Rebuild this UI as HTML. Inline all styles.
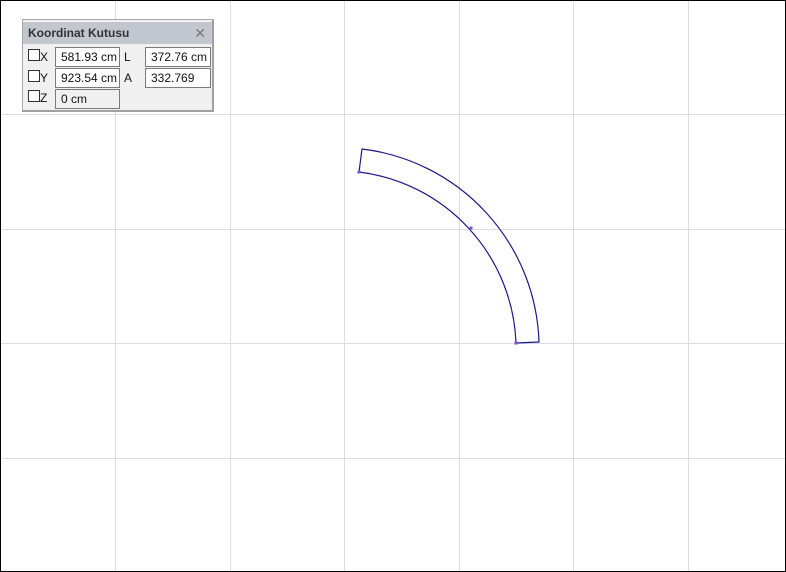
<!DOCTYPE html>
<html><head><meta charset="utf-8"><style>
*{margin:0;padding:0;box-sizing:border-box}
body{width:786px;height:572px;overflow:hidden;background:#fff;font-family:"Liberation Sans",sans-serif;position:relative}
#frame{position:absolute;left:0;top:0;width:786px;height:572px;border:1px solid #000}
svg{position:absolute;left:0;top:0}
.panel{position:absolute;left:22px;top:19px;width:192px;height:93px;background:#f0f0f0;border:1px solid #a8a8a8;border-right:2px solid #a0a0a0;border-bottom:2px solid #a0a0a0}
.title{position:absolute;left:0;top:2px;width:100%;height:22px;background:#c2c6ce;font-weight:bold;font-size:12px;color:#333;line-height:22px;padding-left:5px}
.x{position:absolute;right:6px;top:0;font-weight:normal;color:#777;font-size:14px}
.cb{position:absolute;width:12px;height:12px;border:1px solid #333;background:#fff}
.lb{position:absolute;font-size:12px;color:#111}
.in{position:absolute;height:20px;border:1px solid #7a7a7a;background:#fff;font-size:12px;line-height:18px;padding-left:5px;color:#111}
</style></head><body>
<svg width="786" height="572">
<g stroke="#dcdce6" stroke-width="1">
<line x1="115.5" y1="0" x2="115.5" y2="572"/><line x1="230.5" y1="0" x2="230.5" y2="572"/><line x1="344.5" y1="0" x2="344.5" y2="572"/><line x1="459.5" y1="0" x2="459.5" y2="572"/><line x1="573.5" y1="0" x2="573.5" y2="572"/><line x1="688.5" y1="0" x2="688.5" y2="572"/>
<line x1="0" y1="114.5" x2="786" y2="114.5"/><line x1="0" y1="229.5" x2="786" y2="229.5"/><line x1="0" y1="343.5" x2="786" y2="343.5"/><line x1="0" y1="458.5" x2="786" y2="458.5"/>
</g>
<path d="M359,172 A179,179 0 0 1 516,343 L539,342 A201,201 0 0 0 362,149 Z" fill="none" stroke="#1a1a8a" stroke-width="1.2"/>
<g fill="#8a4ad0"><rect x="357.5" y="170.5" width="3" height="3"/><rect x="469.5" y="226.5" width="3" height="3"/><rect x="514.5" y="341.5" width="3" height="3"/></g>
</svg>
<div id="frame"></div>
<div class="panel">
<div class="title">Koordinat Kutusu<span class="x">✕</span></div>
<div class="cb" style="left:5px;top:29px"></div><div class="lb" style="left:17px;top:30px">X</div>
<div class="cb" style="left:5px;top:50px"></div><div class="lb" style="left:17px;top:51px">Y</div>
<div class="cb" style="left:5px;top:70px"></div><div class="lb" style="left:17px;top:71px">Z</div>
<div class="in" style="left:32px;top:27px;width:65px">581.93 cm</div>
<div class="in" style="left:32px;top:48px;width:65px">923.54 cm</div>
<div class="in" style="left:32px;top:69px;width:65px;background:#f0f0f0">0 cm</div>
<div class="lb" style="left:101px;top:30px">L</div>
<div class="lb" style="left:101px;top:51px">A</div>
<div class="in" style="left:122px;top:27px;width:66px">372.76 cm</div>
<div class="in" style="left:122px;top:48px;width:66px">332.769</div>
</div>
</body></html>
